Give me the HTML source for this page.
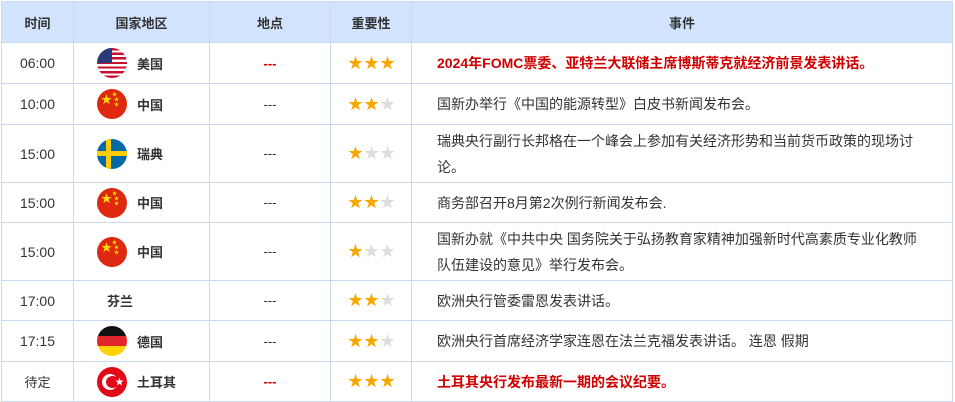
<!DOCTYPE html>
<html><head><meta charset="utf-8"><style>
body{margin:0;background:#fff;font-family:"Liberation Sans","Noto Sans CJK SC",sans-serif;}
table{position:absolute;left:1px;top:1px;border-collapse:collapse;table-layout:fixed;width:952px;}
td,th{border:1px solid #c9d9f2;padding:0;font-size:13px;color:#333;text-align:center;}
th{background:#d2e3fd;height:40px;font-weight:bold;color:#333;}
.t{font-size:14px;}
.c{text-align:left;}
.cw{display:flex;align-items:center;padding-left:23px;}
.flag{width:30px;height:30px;border-radius:50%;overflow:hidden;margin-right:10px;flex:none;position:relative}
.cn{font-weight:bold;font-size:13px}
.e{text-align:left;padding-left:25px;padding-right:30px;line-height:26px;font-size:14px}
.red{color:#d00000;font-weight:bold}
.st{font-size:15px;letter-spacing:1px;color:#f7a800;line-height:15px;padding-left:2px}
.st i{font-style:normal;color:#ddd}
.d{color:#333}
.dr{color:#d00000;font-weight:bold}
.cs{position:absolute;color:#ffde00;line-height:1}
</style></head><body>
<table>
<colgroup><col style="width:72px"><col style="width:136px"><col style="width:121px"><col style="width:81px"><col></colgroup>
<tr><th>时间</th><th>国家地区</th><th>地点</th><th>重要性</th><th>事件</th></tr>
<tr style="height:41px"><td class="t">06:00</td><td class="c"><div class="cw"><div class="flag" style="background:repeating-linear-gradient(#c8102e 0 2.3px,#fff 2.3px 4.6px)"><div style="position:absolute;left:0;top:0;width:15px;height:15px;background:#2a3a78"></div></div><span class="cn">美国</span></div></td><td class="dr">---</td><td class="st">★★★</td><td class="e red">2024年FOMC票委、亚特兰大联储主席博斯蒂克就经济前景发表讲话。</td></tr>
<tr style="height:41px"><td class="t">10:00</td><td class="c"><div class="cw"><div class="flag" style="background:#de2910"><span class="cs" style="left:4px;top:6px;font-size:11px">★</span><span class="cs" style="left:15px;top:4px;font-size:5px">★</span><span class="cs" style="left:17px;top:9px;font-size:5px">★</span><span class="cs" style="left:17px;top:14px;font-size:5px">★</span></div><span class="cn">中国</span></div></td><td class="d">---</td><td class="st">★★<i>★</i></td><td class="e">国新办举行《中国的能源转型》白皮书新闻发布会。</td></tr>
<tr style="height:58px"><td class="t">15:00</td><td class="c"><div class="cw"><div class="flag" style="background:#006aa7"><div style="position:absolute;left:9px;top:0;width:5px;height:30px;background:#fecc00"></div><div style="position:absolute;left:0;top:12px;width:30px;height:5px;background:#fecc00"></div></div><span class="cn">瑞典</span></div></td><td class="d">---</td><td class="st">★<i>★★</i></td><td class="e">瑞典央行副行长邦格在一个峰会上参加有关经济形势和当前货币政策的现场讨论。</td></tr>
<tr style="height:40px"><td class="t">15:00</td><td class="c"><div class="cw"><div class="flag" style="background:#de2910"><span class="cs" style="left:4px;top:6px;font-size:11px">★</span><span class="cs" style="left:15px;top:4px;font-size:5px">★</span><span class="cs" style="left:17px;top:9px;font-size:5px">★</span><span class="cs" style="left:17px;top:14px;font-size:5px">★</span></div><span class="cn">中国</span></div></td><td class="d">---</td><td class="st">★★<i>★</i></td><td class="e">商务部召开8月第2次例行新闻发布会.</td></tr>
<tr style="height:58px"><td class="t">15:00</td><td class="c"><div class="cw"><div class="flag" style="background:#de2910"><span class="cs" style="left:4px;top:6px;font-size:11px">★</span><span class="cs" style="left:15px;top:4px;font-size:5px">★</span><span class="cs" style="left:17px;top:9px;font-size:5px">★</span><span class="cs" style="left:17px;top:14px;font-size:5px">★</span></div><span class="cn">中国</span></div></td><td class="d">---</td><td class="st">★<i>★★</i></td><td class="e">国新办就《中共中央 国务院关于弘扬教育家精神加强新时代高素质专业化教师队伍建设的意见》举行发布会。</td></tr>
<tr style="height:40px"><td class="t">17:00</td><td class="c"><div class="cw" style="padding-left:33px"><span class="cn">芬兰</span></div></td><td class="d">---</td><td class="st">★★<i>★</i></td><td class="e">欧洲央行管委雷恩发表讲话。</td></tr>
<tr style="height:41px"><td class="t">17:15</td><td class="c"><div class="cw"><div class="flag" style="background:linear-gradient(#111 0 33%,#e3262b 33% 66%,#ffd200 66%)"></div><span class="cn">德国</span></div></td><td class="d">---</td><td class="st">★★<i>★</i></td><td class="e">欧洲央行首席经济学家连恩在法兰克福发表讲话。 连恩 假期</td></tr>
<tr style="height:40px"><td class="t" style="font-size:13px">待定</td><td class="c"><div class="cw"><div class="flag" style="background:#e30a17"><div style="position:absolute;left:5px;top:7px;width:16px;height:16px;border-radius:50%;background:#fff"></div><div style="position:absolute;left:9px;top:9px;width:13px;height:12px;border-radius:50%;background:#e30a17"></div><span style="position:absolute;left:18px;top:8px;color:#fff;font-size:9px">★</span></div><span class="cn">土耳其</span></div></td><td class="dr">---</td><td class="st">★★★</td><td class="e red">土耳其央行发布最新一期的会议纪要。</td></tr>
</table>
</body></html>
